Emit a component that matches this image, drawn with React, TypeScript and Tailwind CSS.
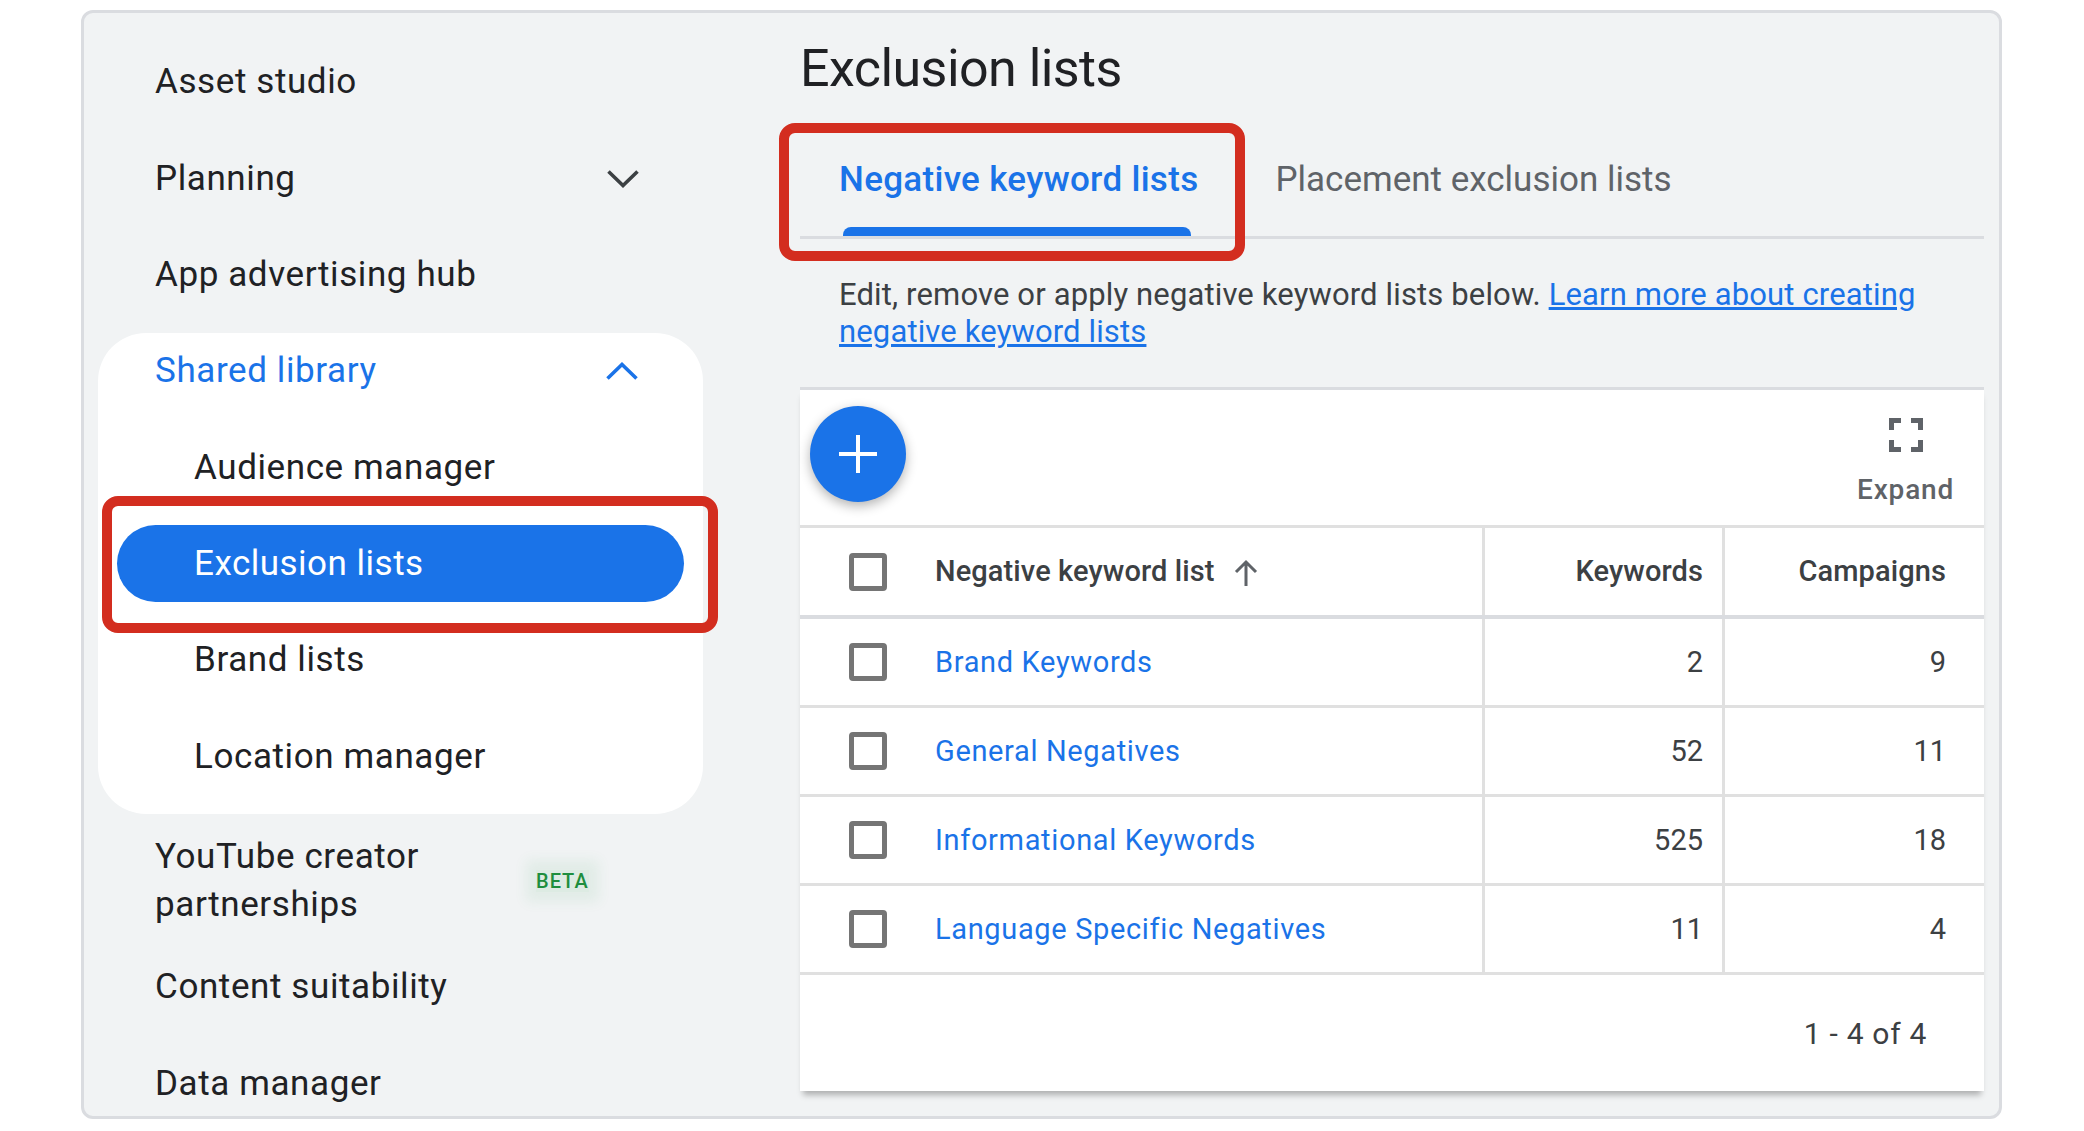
const rows = [
  { name: "Brand Keywords", keywords: "2", campaigns: "9" },
  { name: "General Negatives", keywords: "52", campaigns: "11" },
  { name: "Informational Keywords", keywords: "525", campaigns: "18" },
  { name: "Language Specific Negatives", keywords: "11", campaigns: "4" },
];

function Chevron({ up, color }: { up?: boolean; color: string }) {
  return (
    <svg width="32" height="18" viewBox="0 0 32 18" fill="none" stroke={color} strokeWidth="3.6">
      <polyline points={up ? "1.5,16.5 16,2.5 30.5,16.5" : "1.5,1.5 16,15.5 30.5,1.5"} />
    </svg>
  );
}

function NavItem({ label, chevron }: { label: string; chevron?: boolean }) {
  return (
    <div className="flex h-[96.5px] items-center justify-between pl-[71px] pr-[161px] text-[35px] tracking-[0.6px] text-[#202124]">
      <span>{label}</span>
      {chevron && <Chevron color="#3c4043" />}
    </div>
  );
}

function SubItem({ label }: { label: string }) {
  return <div className="flex h-[96.5px] items-center pl-[96px] pt-[2px] text-[35px] tracking-[0.6px] text-[#202124]">{label}</div>;
}

function Checkbox() {
  return <div className="h-[38px] w-[38px] rounded-[4px] border-[5px] border-[#757575] bg-white" />;
}

export default function App() {
  return (
    <div className="h-[1131px] w-full overflow-hidden bg-white pl-[81px] pt-[10px] font-['Roboto',sans-serif]">
      <div className="flex h-[1109px] w-[1921px] overflow-hidden rounded-[12px] border-[3px] border-[#dadce0] bg-[#f1f3f4]">
        <aside className="w-[716px] shrink-0 pt-[21px]">
          <NavItem label="Asset studio" />
          <NavItem label="Planning" chevron />
          <NavItem label="App advertising hub" />

          <div className="ml-[14px] mt-[9px] w-[605px] rounded-[48px] bg-white pb-[10px]">
            <div className="mb-[10px] flex h-[76px] items-center justify-between pl-[57px] pr-[65px] text-[35px] tracking-[0.6px] text-[#1a73e8]">
              <span className="pt-[2px]">Shared library</span>
              <Chevron up color="#1a73e8" />
            </div>
            <SubItem label="Audience manager" />
            <div className="relative flex h-[96px] items-center px-[19px]">
              <div className="flex h-[77px] w-full items-center rounded-full bg-[#1a73e8] pl-[77px] pt-[2px] text-[35px] tracking-[0.5px] text-white">
                Exclusion lists
              </div>
              <div className="absolute left-[4px] top-[-19px] h-[137px] w-[616px] rounded-[16px] border-[10px] border-[#d32d1f]" />
            </div>
            <SubItem label="Brand lists" />
            <SubItem label="Location manager" />
          </div>

          <div className="mt-[18px] flex h-[96px] items-center pl-[71px] pt-[2px] text-[35px] leading-[48px] tracking-[0.6px] text-[#202124]">
            <div className="w-[381px]">
              YouTube creator
              <br />
              partnerships
            </div>
            <span className="bg-[#34a853]/10 text-[20px] font-medium leading-[22px] tracking-[1px] text-[#1e8e3e] shadow-[0_0_12px_10px_rgba(52,168,83,0.08)]">
              BETA
            </span>
          </div>
          <div className="mt-[11px]">
            <NavItem label="Content suitability" />
            <NavItem label="Data manager" />
          </div>
        </aside>

        <main className="w-[1184px] shrink-0 pt-[24px]">
          <h1 className="mb-[20px] text-[52px] font-normal leading-[64px] tracking-[-0.55px] text-[#202124]">Exclusion lists</h1>

          <div className="flex h-[118px] items-center border-b-[3px] border-[#dadce0] text-[35px]">
            <div className="relative flex h-full items-center px-[39px] pt-[3px] font-medium tracking-[0.3px] text-[#1a73e8]">
              Negative keyword lists
              <div className="absolute bottom-0 left-[43px] h-[9px] w-[348px] rounded-t-[8px] bg-[#1a73e8]" />
              <div className="absolute left-[-21px] top-[2px] h-[138px] w-[466px] rounded-[16px] border-[10px] border-[#d32d1f]" />
            </div>
            <div className="pl-[38px] pr-[39px] pt-[3px] text-[#5f6368]">Placement exclusion lists</div>
          </div>

          <p className="mb-[37px] pl-[39px] pt-[37px] text-[31px] leading-[37px] tracking-[0.14px] text-[#3c4043]">
            Edit, remove or apply negative keyword lists below.{" "}
            <a className="text-[#1a73e8] underline">
              Learn more about creating
              <br />
              negative keyword lists
            </a>
          </p>

          <section className="border-t-[3px] border-[#dadce0] bg-white shadow-[0_7px_6px_-3px_rgba(0,0,0,0.28)]">
            <div className="flex h-[138px] items-start justify-between border-b-[3px] border-[#e0e0e0] pl-[10px] pr-[30px] pt-[16px]">
              <button className="flex h-[96px] w-[96px] items-center justify-center rounded-full bg-[#1a73e8] shadow-[0_4px_12px_rgba(0,0,0,0.3)]">
                <svg width="44" height="44" viewBox="0 0 44 44" stroke="white" strokeWidth="4">
                  <line x1="3" y1="22" x2="41" y2="22" />
                  <line x1="22" y1="3" x2="22" y2="41" />
                </svg>
              </button>
              <div className="flex flex-col items-center gap-[20px] pt-[12px]">
                <svg width="34" height="34" viewBox="0 0 34 34" fill="none" stroke="#5f6368" strokeWidth="5">
                  <path d="M2.5 12V2.5H12M22 2.5h9.5V12M31.5 22v9.5H22M12 31.5H2.5V22" />
                </svg>
                <span className="text-[28px] font-medium leading-[36px] tracking-[0.8px] text-[#5f6368]">Expand</span>
              </div>
            </div>

            <div className="flex h-[91px] items-center border-b-[4px] border-[#dadce0] text-[29px] font-medium tracking-[0.1px] text-[#3c4043]">
              <div className="flex h-full w-[682px] items-center gap-[48px] pl-[49px]">
                <Checkbox />
                <div className="flex items-center gap-[18px]">
                  <span>Negative keyword list</span>
                  <svg width="26" height="28" viewBox="0 0 26 28" fill="none" stroke="#5f6368" strokeWidth="3" className="mt-[2px]">
                    <path d="M13 27V3M3 13L13 3l10 10" />
                  </svg>
                </div>
              </div>
              <div className="flex h-full w-[240px] items-center justify-end border-l-[3px] border-[#e0e0e0] pr-[19px]">Keywords</div>
              <div className="flex h-full w-[262px] items-center justify-end border-l-[3px] border-[#e0e0e0] pr-[38px]">Campaigns</div>
            </div>

            {rows.map((row) => (
              <div key={row.name} className="flex h-[89px] items-center border-b-[3px] border-[#e0e0e0] text-[29px] text-[#3c4043]">
                <div className="flex h-full w-[682px] items-center gap-[48px] pl-[49px]">
                  <Checkbox />
                  <a className="pt-[1px] tracking-[0.65px] text-[#1a73e8]">{row.name}</a>
                </div>
                <div className="flex h-full w-[240px] items-center justify-end border-l-[3px] border-[#e0e0e0] pr-[19px] pt-[1px]">{row.keywords}</div>
                <div className="flex h-full w-[262px] items-center justify-end border-l-[3px] border-[#e0e0e0] pr-[38px] pt-[1px]">{row.campaigns}</div>
              </div>
            ))}

            <div className="flex h-[116px] items-center justify-end pr-[57px] text-[30px] tracking-[0.7px] text-[#3c4043]">1 - 4 of 4</div>
          </section>
        </main>
      </div>
    </div>
  );
}
